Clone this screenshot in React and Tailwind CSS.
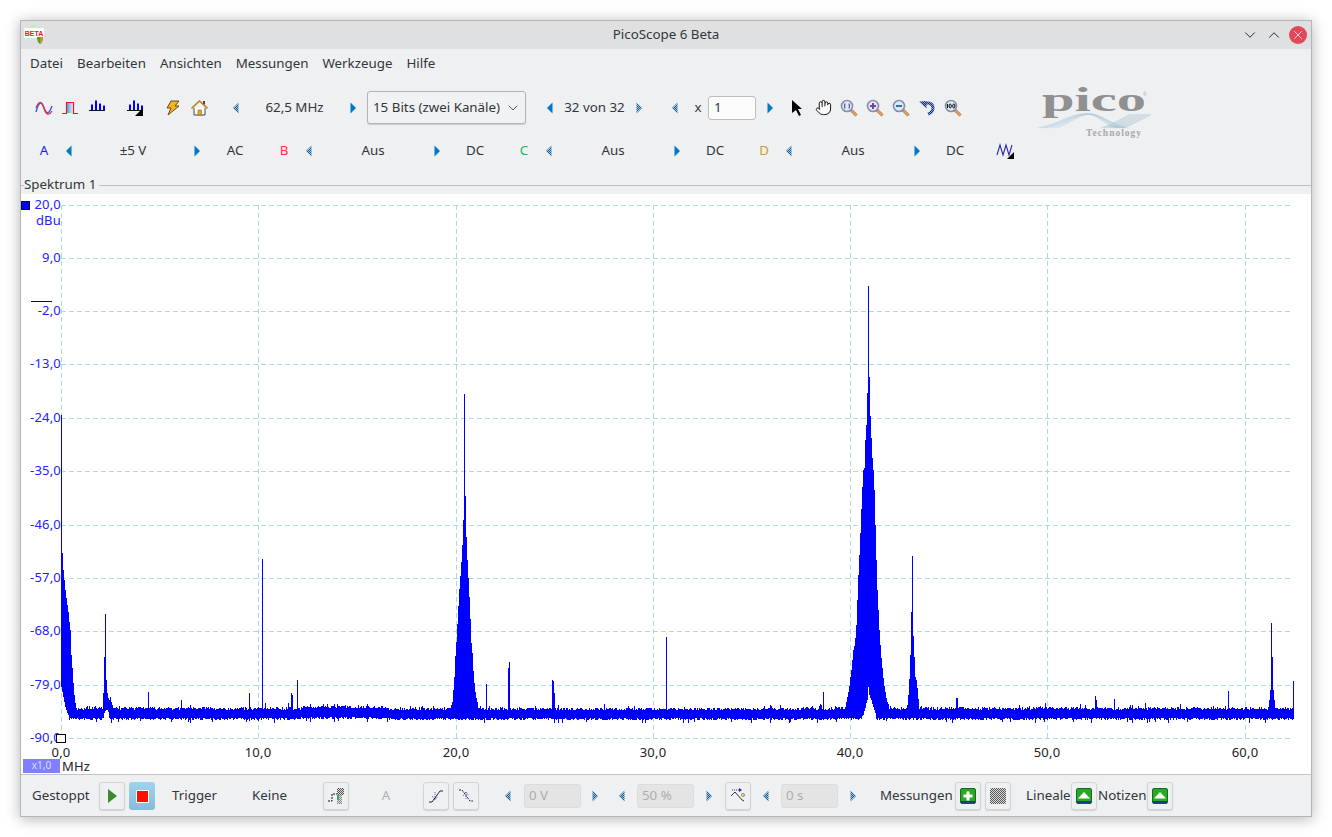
import { ChevronDown, ChevronUp, Hand, X } from 'lucide-react';

// spectrum trace, one vertical stroke per pixel column
const SPIKES = {
  61: 415, 62: 553, 63: 570, 64: 580, 65: 590, 66: 598, 67: 605, 68: 612, 69: 622, 70: 630, 71: 655, 72: 668, 73: 683, 74: 695, 75: 703, 76: 708,
  103: 693, 104: 657, 105: 614, 106: 680, 107: 693, 108: 698, 109: 700, 110: 697, 111: 702, 112: 705, 148: 692, 181: 700, 249: 693, 262: 559, 265: 703, 288: 703, 291: 693, 292: 695, 297: 680, 327: 704,
  451: 705, 452: 702, 453: 690, 454: 677, 455: 656, 456: 642, 457: 624, 458: 606, 459: 589, 460: 576, 461: 562, 462: 545, 463: 520, 464: 394, 465: 496, 466: 537, 467: 560, 468: 578, 469: 597, 470: 619, 471: 643, 472: 653, 473: 671, 474: 683, 475: 692, 476: 698, 477: 702,
  486: 684, 508: 668, 509: 662, 552: 680, 553: 681, 554: 693, 666: 637, 604: 704, 780: 705, 819: 706, 820: 704, 823: 692,
  845: 707, 846: 702, 847: 697, 848: 692, 849: 686, 850: 677, 851: 670, 852: 660, 853: 650, 854: 646, 855: 638, 856: 625, 857: 600, 858: 575, 859: 555, 860: 533, 861: 509, 862: 487, 863: 470, 864: 468, 865: 440, 866: 425, 867: 393, 868: 286, 869: 377, 870: 416, 871: 438, 872: 458, 873: 470, 874: 490, 875: 525, 876: 560, 877: 590, 878: 610, 879: 630, 880: 645, 881: 658, 882: 668, 883: 678, 884: 686, 885: 692, 886: 698, 887: 702, 888: 704, 890: 706, 895: 708,
  907: 705, 908: 695, 909: 679, 910: 655, 911: 612, 912: 556, 913: 636, 914: 657, 915: 677, 916: 680, 917: 688, 918: 699, 920: 707,
  956: 698, 957: 698, 1045: 703, 1080: 704, 1095: 696, 1096: 700, 1114: 699, 1145: 703, 1228: 691, 1180: 704, 1269: 700, 1270: 690, 1271: 623, 1272: 657, 1273: 690, 1274: 700, 1293: 681,
};

const NOTCH = {
  61: 687, 62: 692, 63: 697, 64: 702, 65: 707, 66: 710, 67: 713, 68: 715, 104: 713, 105: 711, 106: 710, 107: 710, 108: 712,
  860: 718, 862: 716, 863: 715, 864: 711, 865: 708, 866: 703, 867: 700, 868: 687, 869: 695, 870: 698, 871: 700, 872: 704, 873: 707, 874: 710, 875: 713,
};

const buildTrace = () => {
  let seed = 41;
  const rnd = () => {
    seed = (seed * 1664525 + 1013904223) % 4294967296;
    return seed / 4294967296;
  };
  let d = '';
  for (let x = 61; x <= 1293; x += 1) {
    const drift = x > 300 && x < 385 ? -2 : x > 385 && x < 800 ? 0 : -0.5;
    const a = rnd();
    const b = rnd();
    let top = 707.5 + drift + a * 3;
    if (a > 0.93) top -= 2 + b * 3;
    let bottom = 718 + drift / 2 + b * 2.5;
    if (b > 0.95) bottom += 1 + a * 2;
    if (SPIKES[x]) top = Math.min(top, SPIKES[x]);
    if (NOTCH[x]) bottom = NOTCH[x];
    d += `M${x + 0.5} ${Math.round(top)}V${Math.round(bottom)}`;
  }
  return d;
};

const TRACE = buildTrace();
const GRID_X = [61, 258, 456, 653, 850, 1047, 1245];
const X_LABELS = ['0,0', '10,0', '20,0', '30,0', '40,0', '50,0', '60,0'];
const Y_LABELS = ['20,0', '9,0', '-2,0', '-13,0', '-24,0', '-35,0', '-46,0', '-57,0', '-68,0', '-79,0', '-90,0'];
const GRID_Y = [205, 258, 311, 364, 418, 471, 525, 578, 631, 685, 738];

const Arrow = ({ dir = 'left', dim = false }) => (
  <span className="flex w-5 shrink-0 items-center justify-center">
    <svg width="8" height="12" viewBox="0 0 8 12">
      <path d={dir === 'left' ? 'M6.5 0.5V11.5L1 6Z' : 'M1.5 0.5V11.5L7 6Z'} fill={dim ? 'url(#dithArrow)' : '#0078c8'} />
    </svg>
  </span>
);

const Slot = ({ children, className = 'w-[26px]' }) => (
  <span className={`flex h-full shrink-0 items-center justify-center ${className}`}>{children}</span>
);

const Btn = ({ children, className = '' }) => (
  <span className={`flex h-7 w-[26px] shrink-0 items-center justify-center rounded-[3px] border border-[#d2d3d5] bg-[#eff0f2] shadow-[0_1px_1px_rgba(0,0,0,0.12)] ${className}`}>
    {children}
  </span>
);

const DisabledInput = ({ value }) => (
  <span className="flex h-6 w-[57px] shrink-0 items-center rounded-[3px] border border-[#dcdcdc] bg-[#e4e4e4] px-[4px] text-[#aeaeae]">
    {value}
  </span>
);

const SpectrumIcon = ({ corner }) => (
  <svg width="20" height="18" viewBox="0 0 20 18">
    <path d="M5 5.5h2v6H5zM9 1.5h2v10H9zM13 4.5h2v7h-2zM17 6.5h2v5h-2z" fill="#0000ff" />
    <path d="M3 11.5h16" stroke="#111" />
    {corner && <path d="M19 9v8h-8z" fill="#000" />}
  </svg>
);

const Magnifier = ({ children }) => (
  <svg width="18" height="18" viewBox="0 0 18 18">
    <path d="M10.5 10.5l6 6" stroke="#777" strokeWidth="3" />
    <path d="M11.5 11.5l5 5" stroke="#f09a50" strokeWidth="2" />
    <circle cx="7" cy="7" r="5.5" fill="#d8ecfa" stroke="#8c8ca8" strokeWidth="1.6" />
    {children}
  </svg>
);

const GreenButton = ({ plus }) => (
  <svg width="16" height="16" viewBox="0 0 16 16">
    <rect x="0.5" y="0.5" width="15" height="15" rx="1.5" fill="#2aa822" stroke="#146a2c" />
    <rect x="1" y="13" width="14" height="2.5" fill="#1c3f7c" />
    {plus
      ? <path d="M6.5 3.5h3v3h3v3h-3v3h-3v-3h-3v-3h3z" fill="#fff" />
      : <path d="M8 4l6 6.5H2z" fill="#fff" />}
  </svg>
);

const PicoLogo = () => (
  <svg width="116" height="66" viewBox="0 -10 116 66" className="shrink-0">
    <text x="7" y="24" fontFamily="'Liberation Serif', serif" fontSize="34" fontWeight="700" fill="#909090" textLength="104" lengthAdjust="spacingAndGlyphs">pico</text>
    <text x="108" y="9" fontFamily="'Liberation Sans', sans-serif" fontSize="5" fill="#aaa">®</text>
    {[0, 1, 2, 3, 4, 5, 6, 7].map((i) => (
      <g key={i} fill="none" strokeWidth="0.4">
        <path d={`M${2 + i * 3} 41 C ${22 + i * 3} ${38 - i} ${32 + i * 2} 28 ${48 + i} 27 S ${66 + i * 2} ${36 + i / 2} ${80 + i * 2} 41`} stroke="#a9cadd" />
        <path d={`M${66 + i * 3} 41 C ${76 + i * 3} 38 ${88 + i * 3} 31 ${96 + i * 3} 27`} stroke="#7fa6bd" />
      </g>
    ))}
    <text x="51" y="49" fontFamily="'Liberation Serif', serif" fontSize="9.5" fontWeight="700" fill="#a8a8a8" textLength="55">Technology</text>
  </svg>
);

const channels = [
  { label: 'A', color: 'text-[#1a1aff]', range: '±5 V', coupling: 'AC', dim: false },
  { label: 'B', color: 'text-[#ff3040]', range: 'Aus', coupling: 'DC', dim: true },
  { label: 'C', color: 'text-[#16b85a]', range: 'Aus', coupling: 'DC', dim: true },
  { label: 'D', color: 'text-[#c9a22c]', range: 'Aus', coupling: 'DC', dim: true },
];

const Spectrum = () => (
  <svg width="1290" height="580" viewBox="21 194 1290 580" className="block shrink-0 overflow-visible bg-white">
    <g stroke="#add8e6" strokeDasharray="5 3" fill="none">
      {GRID_X.map((x) => <path key={x} d={`M${x + 0.5} 205V738`} />)}
      {GRID_Y.map((y) => <path key={y} d={`M61 ${y + 0.5}H1293`} />)}
    </g>
    <path d={TRACE} stroke="#0000ff" strokeWidth="1" fill="none" shapeRendering="crispEdges" />
    <g fontFamily="'Noto Sans', sans-serif" fontSize="13" letterSpacing="0.2">
      {Y_LABELS.map((t, i) => (
        <text key={t} x="61" y={GRID_Y[i] + 4} textAnchor="end" fill="#2222ff">{t}</text>
      ))}
      <text x="61" y="225" textAnchor="end" fill="#2222ff">dBu</text>
      {X_LABELS.map((t, i) => (
        <text key={t} x={GRID_X[i]} y="757" textAnchor="middle" fill="#222">{t}</text>
      ))}
      <text x="62" y="771" fill="#222">MHz</text>
    </g>
    <rect x="21.5" y="201.5" width="8" height="8" fill="#0000ff" stroke="#000050" />
    <path d="M31 301.5H52" stroke="#111" />
    <rect x="56.5" y="734.5" width="9" height="8" fill="#fff" stroke="#000" />
    <rect x="23" y="759" width="37" height="14" fill="#8080ff" />
    <text x="41.5" y="769" textAnchor="middle" fontFamily="'Noto Sans', sans-serif" fontSize="10" fill="#dcdcff">x1,0</text>
  </svg>
);

export default function App() {
  return (
    <div className="h-[837px] w-[1332px] overflow-hidden bg-white pl-5 pt-5 font-['Noto_Sans',sans-serif] text-[13.33px] text-[#31363b]">
      <svg width="0" height="0" className="absolute">
        <defs>
          <pattern id="dithArrow" width="2" height="2" patternUnits="userSpaceOnUse">
            <rect width="2" height="2" fill="#9fc0d6" />
            <rect width="1" height="1" fill="#1c5f8e" />
            <rect x="1" y="1" width="1" height="1" fill="#1c5f8e" />
          </pattern>
          <pattern id="dithBlue" width="2" height="2" patternUnits="userSpaceOnUse">
            <rect width="2" height="2" fill="#8aa0cc" />
            <rect width="1" height="1" fill="#14307e" />
            <rect x="1" y="1" width="1" height="1" fill="#14307e" />
          </pattern>
          <pattern id="dithGrey" width="2" height="2" patternUnits="userSpaceOnUse">
            <rect width="2" height="2" fill="#dcdcdc" />
            <rect width="1" height="1" fill="#555" />
            <rect x="1" y="1" width="1" height="1" fill="#555" />
          </pattern>
          <linearGradient id="squareFill" x1="0" x2="1" y1="0" y2="0">
            <stop offset="0" stopColor="#3da8e6" />
            <stop offset="1" stopColor="#e8e8f4" />
          </linearGradient>
        </defs>
      </svg>

      <div className="flex h-[797px] w-[1292px] flex-col border border-[#b4b5b7] bg-[#eff0f2] shadow-[0_2px_14px_rgba(0,0,0,0.3)]">
        {/* title bar */}
        <div className="relative flex h-7 shrink-0 items-center justify-center bg-[#dfe0e2]">
          <svg width="20" height="20" viewBox="0 0 20 20" className="absolute left-[3px] top-[3px]">
            <ellipse cx="10" cy="5" rx="5" ry="5" fill="#cfe8c8" />
            <rect x="0" y="4" width="20" height="10" fill="#fff" />
            <text x="10" y="11.5" textAnchor="middle" fontFamily="'Liberation Sans', sans-serif" fontSize="7" fontWeight="700" fill="#d22">BETA</text>
            <path d="M13 13h6c0 3-1 6-3 7-2-1-3-4-3-7z" fill="#5a9c2c" />
            <path d="M16 13h3c0 3-1 6-3 7z" fill="#c89428" />
          </svg>
          <span>PicoScope 6 Beta</span>
          <div className="absolute right-[4px] top-0 flex h-7 items-center gap-[6px] text-[#232629]">
            <ChevronDown size={18} strokeWidth={1.3} />
            <ChevronUp size={18} strokeWidth={1.3} />
            <span className="flex h-[18px] w-[18px] items-center justify-center rounded-full bg-[#e2475a] text-white">
              <X size={14} strokeWidth={1.3} />
            </span>
          </div>
        </div>

        {/* menu */}
        <div className="flex h-[29px] shrink-0 items-center gap-[14px] pl-[9px]">
          {['Datei', 'Bearbeiten', 'Ansichten', 'Messungen', 'Werkzeuge', 'Hilfe'].map((m) => (
            <span key={m}>{m}</span>
          ))}
        </div>

        {/* toolbars */}
        <div className="flex h-[98px] shrink-0 pl-[10px] pt-[13px]">
          <div className="flex w-[1004px] shrink-0 flex-col">
            <div className="flex h-[33px] items-center">
              <Slot>
                <svg width="18" height="14" viewBox="0 0 18 14" fill="none">
                  <path d="M1 11C4 0 6 0 9 7s5 6 8-2" stroke="#2a5cff" strokeWidth="1.4" />
                  <path d="M1 7c3-8 6-7 8 0s5 8 8 3" stroke="#e8303a" strokeWidth="1.4" />
                </svg>
              </Slot>
              <Slot>
                <svg width="17" height="14" viewBox="0 0 17 14" fill="none">
                  <rect x="5" y="2" width="6" height="10" fill="url(#squareFill)" />
                  <path d="M0 12.5h4.5V1.5h7v11H16" stroke="#f01818" strokeWidth="1.2" />
                </svg>
              </Slot>
              <Slot><SpectrumIcon /></Slot>
              <Slot className="ml-3 w-[26px]"><SpectrumIcon corner /></Slot>
              <Slot className="ml-[13px] w-[26px]">
                <svg width="14" height="16" viewBox="0 0 14 16">
                  <path d="M5 1h8L9 6h4L2 15l3-7H1z" fill="#f2b61e" stroke="#6e4a10" strokeWidth="1" />
                </svg>
              </Slot>
              <Slot>
                <svg width="17" height="16" viewBox="0 0 17 16">
                  <path d="M12 1h2v4l-2-1z" fill="#a02020" />
                  <path d="M3 8v7h11V8" fill="#fffdf0" stroke="#444" />
                  <path d="M0.5 8.5L8.5 1l8 7.5" fill="none" stroke="#b8862a" strokeWidth="1.6" />
                  <rect x="7" y="10" width="3.5" height="5" fill="#e2a92a" stroke="#8a6414" strokeWidth="0.6" />
                </svg>
              </Slot>
              <span className="ml-[14px] flex"><Arrow dim /></span>
              <span className="w-[97px] shrink-0 text-center">62,5 MHz</span>
              <Arrow dir="right" />
              <span className="ml-1 flex h-[33px] w-[159px] shrink-0 items-center justify-between rounded-[3px] border border-[#b3b4b6] bg-[#f1f2f3] pl-[5px] pr-[4px] shadow-[0_1px_1px_rgba(0,0,0,0.15)]">
                <span>15 Bits (zwei Kanäle)</span>
                <ChevronDown size={16} strokeWidth={1.2} />
              </span>
              <span className="ml-[14px] flex"><Arrow /></span>
              <span className="w-[69px] shrink-0 text-center">32 von 32</span>
              <Arrow dir="right" dim />
              <span className="ml-4 flex"><Arrow dim /></span>
              <span className="w-[23px] shrink-0 pl-[3px] text-center">x</span>
              <span className="flex h-6 w-12 shrink-0 items-center rounded-[3px] border border-[#bcbdbf] bg-[#fcfcfc] px-[5px]">1</span>
              <span className="ml-1 flex"><Arrow dir="right" /></span>
              <Slot className="ml-1 w-[26px]">
                <svg width="12" height="16" viewBox="0 0 12 16">
                  <path d="M1 0l10 9H7l3 6-2 1-3-6-4 3z" fill="#000" />
                </svg>
              </Slot>
              <Slot><Hand size={17} strokeWidth={1.3} color="#000" fill="#fff" /></Slot>
              <Slot>
                <Magnifier>
                  <path d="M5 4.5Q4 7 5 9.5M9 4.5Q10 7 9 9.5" stroke="#5a4a9c" fill="none" strokeWidth="1.2" />
                </Magnifier>
              </Slot>
              <Slot>
                <Magnifier>
                  <path d="M7 4v6M4 7h6" stroke="#7a3cae" strokeWidth="2" />
                </Magnifier>
              </Slot>
              <Slot>
                <Magnifier>
                  <path d="M4 7h6" stroke="#3a6cae" strokeWidth="2" />
                </Magnifier>
              </Slot>
              <Slot>
                <svg width="16" height="16" viewBox="0 0 16 16" fill="none">
                  <path d="M0 1.5l7.5-0.5 0 7.5z" fill="url(#dithBlue)" />
                  <path d="M4 5C8 1.5 14 3 14 8c0 3-2 5-5 6" stroke="url(#dithBlue)" strokeWidth="3" />
                </svg>
              </Slot>
              <Slot>
                <Magnifier>
                  <path d="M3.5 5v4" stroke="#111" strokeWidth="1.1" />
                  <ellipse cx="6.2" cy="7" rx="1.1" ry="2" stroke="#111" fill="none" />
                  <ellipse cx="9.8" cy="7" rx="1.1" ry="2" stroke="#111" fill="none" />
                </Magnifier>
              </Slot>
            </div>

            <div className="mt-[11px] flex h-8 items-center">
              {channels.map((c, i) => (
                <div key={c.label} className={`flex h-full items-center ${i > 0 ? 'ml-2' : ''}`}>
                  <span className={`w-[26px] shrink-0 text-center ${c.color}`}>{c.label}</span>
                  <span className="ml-[2px] flex"><Arrow dim={c.dim} /></span>
                  <span className="w-[108px] shrink-0 text-center">{c.range}</span>
                  <Arrow dir="right" />
                  <span className="w-14 shrink-0 text-center">{c.coupling}</span>
                </div>
              ))}
              <Slot className="ml-2 w-7">
                <svg width="18" height="16" viewBox="0 0 18 16" fill="none">
                  <path d="M1 12L4 2l3 10 3-10 3 10 3-10" stroke="#2a2ab0" strokeWidth="1.1" />
                  <path d="M18 9v7h-7z" fill="#000" />
                </svg>
              </Slot>
            </div>
          </div>
          <div className="-mt-[14px]"><PicoLogo /></div>
        </div>

        {/* group title */}
        <div className="flex h-[18px] shrink-0 items-center">
          <span className="h-px w-[3px] bg-[#bdbec0]" />
          <span className="leading-none">Spektrum 1</span>
          <span className="ml-[3px] h-px flex-1 bg-[#bdbec0]" />
        </div>

        <Spectrum />

        {/* bottom bar */}
        <div className="flex h-[43px] shrink-0 items-center border-t border-[#c2c3c5] pl-[11px]">
          <span className="w-[67px] shrink-0">Gestoppt</span>
          <Btn className="border-[#b5b6b8]">
            <svg width="11" height="14" viewBox="0 0 11 14"><path d="M1 0l9 7-9 7z" fill="#3a8a2e" /></svg>
          </Btn>
          <span className="ml-1 flex h-7 w-[26px] shrink-0 items-center justify-center rounded-[3px] bg-[linear-gradient(#9fd4ee,#85bcd8)]">
            <span className="block h-[13px] w-[13px] border border-white bg-[#ff1000]" />
          </span>
          <span className="ml-[17px] w-20 shrink-0">Trigger</span>
          <span className="w-[71px] shrink-0">Keine</span>
          <Btn>
            <svg width="18" height="18" viewBox="0 0 18 18" fill="none">
              <path d="M1 14h4V7h5" stroke="#111" strokeDasharray="2 1" />
              <path d="M10 1h7v7h-7z" fill="url(#dithGrey)" />
              <path d="M10 8h5v9h-5z" fill="url(#dithGrey)" opacity="0.7" />
              <path d="M11 8v5" stroke="#2a9c4a" strokeWidth="1.5" />
            </svg>
          </Btn>
          <span className="w-[74px] shrink-0 text-center text-[#b0b0b0]">A</span>
          <Btn>
            <svg width="16" height="16" viewBox="0 0 16 16" fill="none">
              <path d="M1 14h3L12 3h3" stroke="#111" strokeWidth="0.9" />
              <path d="M7 4v8M4 8l3 4 3-4" stroke="#2a3ca0" strokeWidth="0.8" strokeDasharray="1 1" />
            </svg>
          </Btn>
          <Btn className="ml-1">
            <svg width="16" height="16" viewBox="0 0 16 16" fill="none">
              <path d="M1 2h3l8 11h3" stroke="#111" strokeWidth="0.9" strokeDasharray="2 1" />
              <path d="M8 4v8M5 8l3-4 3 4" stroke="#2a3ca0" strokeWidth="0.8" strokeDasharray="1 1" />
            </svg>
          </Btn>
          <span className="ml-[19px] flex"><Arrow dim /></span>
          <span className="ml-[6px] flex"><DisabledInput value="0 V" /></span>
          <span className="ml-1 flex"><Arrow dir="right" dim /></span>
          <span className="ml-[7px] flex"><Arrow dim /></span>
          <span className="ml-[5px] flex"><DisabledInput value="50 %" /></span>
          <span className="ml-[5px] flex"><Arrow dir="right" dim /></span>
          <Btn className="ml-[6px]">
            <svg width="16" height="16" viewBox="0 0 16 16" fill="none">
              <path d="M1 8l4-4 7 8 2 1" stroke="#222" strokeWidth="0.9" />
              <path d="M2 2h9" stroke="#2a2ab0" strokeDasharray="1 1" />
              <path d="M9 0l3 2-3 2z" fill="#2a2ab0" />
              <circle cx="13" cy="7" r="1.6" fill="#e8d860" stroke="#666" strokeWidth="0.6" />
            </svg>
          </Btn>
          <span className="ml-[5px] flex"><Arrow dim /></span>
          <span className="ml-[5px] flex"><DisabledInput value="0 s" /></span>
          <span className="ml-[5px] flex"><Arrow dir="right" dim /></span>
          <span className="ml-[17px] w-[75px] shrink-0">Messungen</span>
          <Btn><GreenButton plus /></Btn>
          <Btn className="ml-1">
            <svg width="16" height="16" viewBox="0 0 16 16"><rect width="16" height="16" rx="1.5" fill="url(#dithGrey)" /></svg>
          </Btn>
          <span className="ml-[15px] w-[45px] shrink-0">Lineale</span>
          <Btn><GreenButton /></Btn>
          <span className="w-[50px] shrink-0 pl-px">Notizen</span>
          <Btn><GreenButton /></Btn>
        </div>
      </div>
    </div>
  );
}
